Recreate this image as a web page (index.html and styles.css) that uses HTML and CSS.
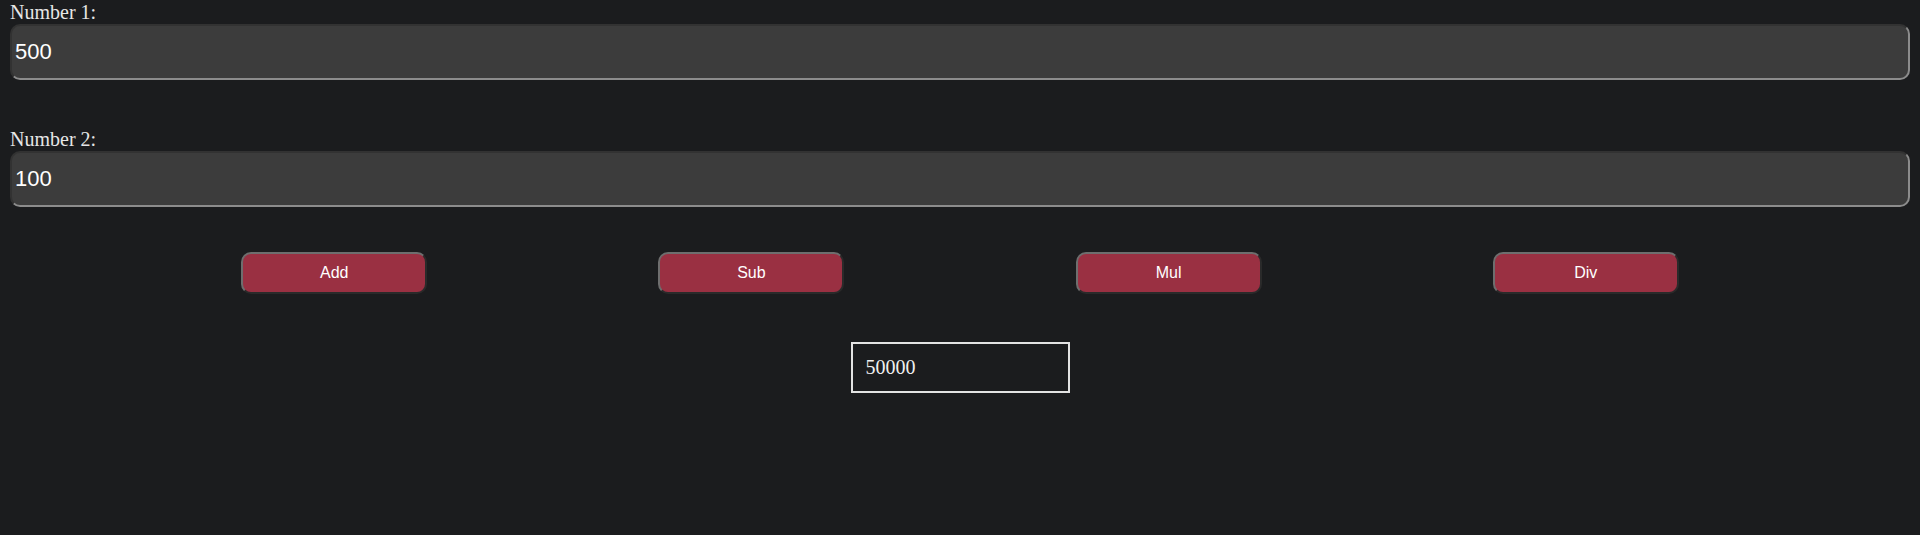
FILE: index.html
```html
<!DOCTYPE html>
<html lang="en">
<head>
<meta charset="utf-8">
<title>Calculator</title>
<link rel="stylesheet" href="styles.css">
</head>
<body>
<div class="calc">
  <div class="field">
    <label class="label" for="n1">Number 1:</label>
    <input class="num" id="n1" type="text" value="500">
  </div>
  <div class="field">
    <label class="label" for="n2">Number 2:</label>
    <input class="num" id="n2" type="text" value="100">
  </div>
  <div class="ops">
    <button class="op">Add</button>
    <button class="op">Sub</button>
    <button class="op">Mul</button>
    <button class="op">Div</button>
  </div>
  <div class="result-row">
    <div class="result">50000</div>
  </div>
</div>
</body>
</html>
```

FILE: styles.css
```css
html, body {
  margin: 0;
  padding: 0;
  background: #1b1c1e;
  height: 100%;
}
body {
  font-family: "Liberation Serif", "Times New Roman", serif;
  color: #e8e8e8;
}
.calc {
  padding: 0 10px;
}
.field {
  margin-bottom: 47px;
}
.field + .field {
  margin-bottom: 45px;
}
.label {
  display: block;
  font-size: 20px;
  line-height: 24px;
  color: #e6e6e6;
}
.num {
  display: block;
  box-sizing: border-box;
  width: 100%;
  height: 56px;
  margin: 0;
  padding: 1px 3px;
  background: #3c3c3c;
  color: #ffffff;
  font-family: "Liberation Sans", Arial, sans-serif;
  font-size: 22px;
  border-style: solid;
  border-width: 2px;
  border-top-color: #323232;
  border-left-color: #323232;
  border-bottom-color: #8c8c8c;
  border-right-color: #8c8c8c;
  border-radius: 10px;
  outline: none;
}
.ops {
  display: flex;
  justify-content: space-evenly;
  margin-bottom: 48px;
}
.op {
  box-sizing: border-box;
  width: 186px;
  height: 42px;
  margin: 0;
  padding: 0;
  background: #9a3042;
  color: #ffffff;
  font-family: "Liberation Sans", Arial, sans-serif;
  font-size: 16px;
  border-style: solid;
  border-width: 2px;
  border-top-color: #6e6e6e;
  border-left-color: #6e6e6e;
  border-bottom-color: #2a2a2a;
  border-right-color: #2a2a2a;
  border-radius: 10px;
}
.result-row {
  display: flex;
  justify-content: center;
}
.result {
  box-sizing: border-box;
  width: 219px;
  height: 51px;
  padding: 12px 13px;
  border: 2px solid #e3e3e3;
  font-size: 20px;
  line-height: 23px;
  color: #f0f0f0;
}
```
